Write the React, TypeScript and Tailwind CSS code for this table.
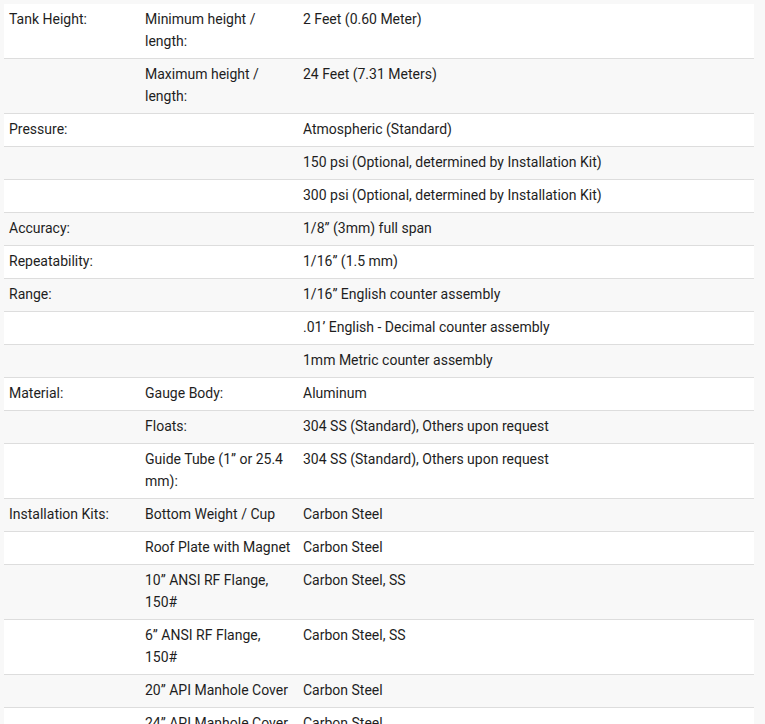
type Row = [string, string, string];

const ROWS: Row[] = [
  ['Tank Height:', 'Minimum height / length:', '2 Feet (0.60 Meter)'],
  ['', 'Maximum height / length:', '24 Feet (7.31 Meters)'],
  ['Pressure:', '', 'Atmospheric (Standard)'],
  ['', '', '150 psi (Optional, determined by Installation Kit)'],
  ['', '', '300 psi (Optional, determined by Installation Kit)'],
  ['Accuracy:', '', '1/8\u201D (3mm) full span'],
  ['Repeatability:', '', '1/16\u201D (1.5 mm)'],
  ['Range:', '', '1/16\u201D English counter assembly'],
  ['', '', '.01\u2019 English - Decimal counter assembly'],
  ['', '', '1mm Metric counter assembly'],
  ['Material:', 'Gauge Body:', 'Aluminum'],
  ['', 'Floats:', '304 SS (Standard), Others upon request'],
  ['', 'Guide Tube (1\u201D or 25.4 mm):', '304 SS (Standard), Others upon request'],
  ['Installation Kits:', 'Bottom Weight / Cup', 'Carbon Steel'],
  ['', 'Roof Plate with Magnet', 'Carbon Steel'],
  ['', '10\u201D ANSI RF Flange, 150#', 'Carbon Steel, SS'],
  ['', '6\u201D ANSI RF Flange, 150#', 'Carbon Steel, SS'],
  ['', '20\u201D API Manhole Cover', 'Carbon Steel'],
  ['', '24\u201D API Manhole Cover', 'Carbon Steel'],
];

export default function App() {
  return (
    <div
      className="min-h-screen bg-[#f8f8f8] p-1 text-[14px] leading-[22px] text-[#1e1e1e]"
      style={{ fontFamily: 'Roboto, "Liberation Sans", sans-serif' }}
    >
      <table className="w-[750px] table-fixed border-collapse">
        <colgroup>
          <col className="w-[136px]" />
          <col className="w-[158px]" />
          <col className="w-[456px]" />
        </colgroup>
        <tbody>
          {ROWS.map((r, i) => (
            <tr
              key={i}
              className={`${i % 2 === 0 ? 'bg-white' : 'bg-[#f8f8f8]'} ${i > 0 ? 'border-t border-[#dddddd]' : ''}`}
            >
              {r.map((c, j) => (
                <td key={j} className="px-[5px] pt-[4px] pb-[6px] align-top">
                  {c}
                </td>
              ))}
            </tr>
          ))}
        </tbody>
      </table>
    </div>
  );
}
